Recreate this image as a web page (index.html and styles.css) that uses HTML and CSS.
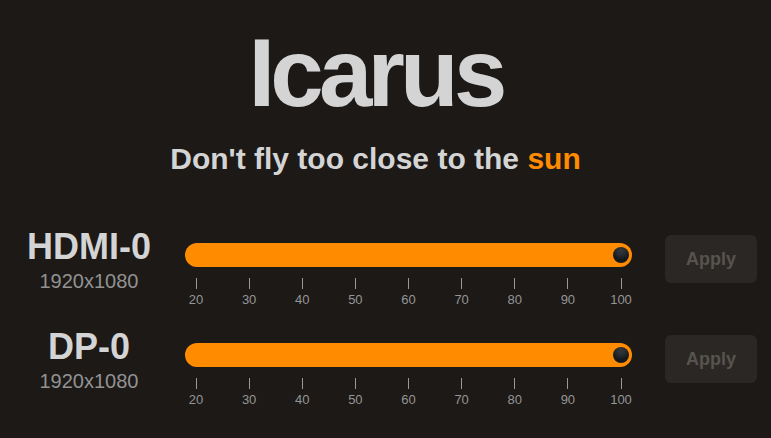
FILE: index.html
```html
<!DOCTYPE html>
<html lang="en">
<head>
<meta charset="utf-8">
<title>Icarus</title>
<link rel="stylesheet" href="styles.css">
</head>
<body>
<main class="page">
  <header class="header">
    <h1 class="title">Icarus</h1>
    <p class="tagline">Don't fly too close to the <span class="sun">sun</span></p>
  </header>
  <section class="outputs">
    <div class="output">
      <div class="output-info">
        <div class="output-name">HDMI-0</div>
        <div class="output-res">1920x1080</div>
      </div>
      <div class="slider">
        <div class="track"><span class="thumb"></span></div>
        <div class="ticks">
          <div class="tick"><span class="tick-mark"></span><span class="tick-label">20</span></div>
          <div class="tick"><span class="tick-mark"></span><span class="tick-label">30</span></div>
          <div class="tick"><span class="tick-mark"></span><span class="tick-label">40</span></div>
          <div class="tick"><span class="tick-mark"></span><span class="tick-label">50</span></div>
          <div class="tick"><span class="tick-mark"></span><span class="tick-label">60</span></div>
          <div class="tick"><span class="tick-mark"></span><span class="tick-label">70</span></div>
          <div class="tick"><span class="tick-mark"></span><span class="tick-label">80</span></div>
          <div class="tick"><span class="tick-mark"></span><span class="tick-label">90</span></div>
          <div class="tick"><span class="tick-mark"></span><span class="tick-label">100</span></div>
        </div>
      </div>
      <button class="apply" type="button">Apply</button>
    </div>
    <div class="output">
      <div class="output-info">
        <div class="output-name">DP-0</div>
        <div class="output-res">1920x1080</div>
      </div>
      <div class="slider">
        <div class="track"><span class="thumb"></span></div>
        <div class="ticks">
          <div class="tick"><span class="tick-mark"></span><span class="tick-label">20</span></div>
          <div class="tick"><span class="tick-mark"></span><span class="tick-label">30</span></div>
          <div class="tick"><span class="tick-mark"></span><span class="tick-label">40</span></div>
          <div class="tick"><span class="tick-mark"></span><span class="tick-label">50</span></div>
          <div class="tick"><span class="tick-mark"></span><span class="tick-label">60</span></div>
          <div class="tick"><span class="tick-mark"></span><span class="tick-label">70</span></div>
          <div class="tick"><span class="tick-mark"></span><span class="tick-label">80</span></div>
          <div class="tick"><span class="tick-mark"></span><span class="tick-label">90</span></div>
          <div class="tick"><span class="tick-mark"></span><span class="tick-label">100</span></div>
        </div>
      </div>
      <button class="apply" type="button">Apply</button>
    </div>
  </section>
</main>
</body>
</html>
```
FILE: styles.css
```css
* { box-sizing: border-box; }
html, body {
  margin: 0;
  padding: 0;
  background: #1c1917;
  height: 100%;
  overflow: hidden;
}
body {
  font-family: "Liberation Sans", Arial, sans-serif;
  color: #d4d4d4;
}
.page {
  padding-top: 25px;
}
.header {
  display: flex;
  flex-direction: column;
  align-items: center;
  padding-right: 20px;
}
.title {
  margin: 0;
  font-size: 96px;
  line-height: 96px;
  font-weight: 700;
  letter-spacing: -0.05em;
  color: #d4d4d4;
}
.tagline {
  margin: 20px 0 0;
  font-size: 30px;
  line-height: 36px;
  font-weight: 700;
  color: #d4d4d4;
}
.sun { color: #ff8c00; }
.outputs {
  margin-top: 50px;
  display: flex;
  flex-direction: column;
  gap: 19px;
  padding: 0 14px 0 16px;
}
.output {
  display: flex;
  align-items: flex-start;
}
.output-info {
  width: 146px;
  display: flex;
  flex-direction: column;
  align-items: center;
}
.output-name {
  font-size: 36px;
  line-height: 40px;
  font-weight: 700;
  color: #d4d4d4;
}
.output-res {
  font-size: 20px;
  line-height: 28px;
  color: #929292;
}
.slider {
  flex: 1;
  margin: 16px 33px 0 23px;
}
.track {
  height: 24px;
  border-radius: 12px;
  background: #ff8c00;
  display: flex;
  align-items: center;
  justify-content: flex-end;
  padding-right: 3px;
}
.thumb {
  width: 16px;
  height: 16px;
  border-radius: 50%;
  background: radial-gradient(circle at 50% 22%, #33383c 0, #262a2e 35%, #15191c 60%);
}
.ticks {
  display: flex;
  justify-content: space-between;
  padding: 11px 11px 0;
}
.tick {
  width: 0;
  display: flex;
  flex-direction: column;
  align-items: center;
}
.tick-mark {
  width: 1px;
  height: 11px;
  background: #999999;
  flex: none;
}
.tick-label {
  font-size: 13px;
  line-height: 16px;
  color: #959595;
  margin-top: 3px;
}
.apply {
  margin-top: 8px;
  width: 92px;
  height: 48px;
  border: none;
  border-radius: 6px;
  background: #2b2725;
  color: #57534e;
  font-family: "Liberation Sans", Arial, sans-serif;
  font-size: 18px;
  line-height: 28px;
  font-weight: 700;
  padding: 0;
  flex: none;
}
```
